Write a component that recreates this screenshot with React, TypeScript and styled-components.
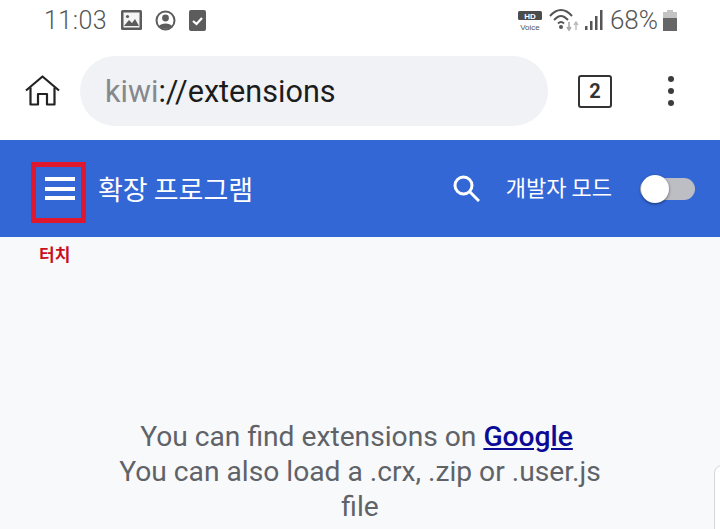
import { createGlobalStyle } from 'styled-components';
import styled from 'styled-components';

const GlobalStyle = createGlobalStyle`
  html, body {
    margin: 0;
    padding: 0;
    background: #f8f9fb;
  }
  body {
    font-family: Roboto, "Noto Sans CJK KR", sans-serif;
  }
`;

const Page = styled.div`
  position: relative;
  width: 720px;
  height: 529px;
  overflow: hidden;
  display: flex;
  flex-direction: column;
`;

const StatusBar = styled.div`
  height: 40px;
  background: #fff;
  display: flex;
  align-items: center;
  padding: 0 43px 0 44px;
  box-sizing: border-box;
  color: #555;
`;

const Clock = styled.span`
  font-size: 25px;
  font-weight: 300;
  margin-right: 14px;
  letter-spacing: 0.5px;
`;

const StatusIcons = styled.div`
  display: flex;
  align-items: center;
  gap: 13px;
`;

const Spacer = styled.div`
  flex: 1;
`;

const Battery = styled.span`
  font-size: 26px;
  font-weight: 300;
  margin: 0 5px 0 6px;
`;

const Toolbar = styled.div`
  height: 100px;
  background: #fff;
  display: flex;
  align-items: center;
  padding: 2px 0 0 25px;
  box-sizing: border-box;
`;

const UrlPill = styled.div`
  width: 468px;
  height: 70px;
  margin: 0 30px 0 20px;
  border-radius: 35px;
  background: #f0f2f5;
  display: flex;
  align-items: center;
  padding-left: 25px;
  box-sizing: border-box;
  font-size: 30.6px;
  color: #1c1c1c;
`;

const Scheme = styled.span`
  color: #85888c;
`;

const TabCount = styled.div`
  width: 34px;
  height: 33px;
  box-sizing: border-box;
  border: 2.5px solid #333;
  border-radius: 3px;
  display: flex;
  align-items: center;
  justify-content: center;
  font-size: 20px;
  font-weight: 700;
  color: #333;
`;

const MenuDots = styled.div`
  margin-left: 56px;
  display: flex;
  flex-direction: column;
  gap: 6px;
`;

const Dot = styled.span`
  width: 6px;
  height: 6px;
  border-radius: 50%;
  background: #3c3c3c;
`;

const Header = styled.header`
  height: 97px;
  background: #3367d6;
  display: flex;
  align-items: center;
  padding: 0 25px 0 45px;
  color: #fff;
`;

const MenuIcon = styled.div`
  width: 30px;
  display: flex;
  flex-direction: column;
  gap: 5.5px;
  margin-right: 23px;
`;

const MenuBar = styled.span`
  height: 4px;
  background: #fff;
`;

const Title = styled.h1`
  margin: 0;
  font-size: 27px;
  font-weight: 400;
  font-family: "Noto Sans CJK KR", sans-serif;
  white-space: nowrap;
`;

const DevLabel = styled.span`
  font-size: 22px;
  font-family: "Noto Sans CJK KR", sans-serif;
  margin: 0 28px 0 26px;
  position: relative;
  top: -3px;
  white-space: nowrap;
`;

const Toggle = styled.div`
  position: relative;
  width: 55px;
  height: 22px;
  border-radius: 11px;
  background: #bdbdc4;
`;

const Knob = styled.span`
  position: absolute;
  left: 1px;
  top: -3px;
  width: 28px;
  height: 28px;
  border-radius: 50%;
  background: #fff;
  box-shadow: 0 1px 3px rgba(0, 0, 0, 0.5);
`;

const Highlight = styled.div`
  position: absolute;
  left: 31px;
  top: 162px;
  width: 55px;
  height: 61px;
  box-sizing: border-box;
  border: 5px solid #e0182d;
`;

const TouchLabel = styled.div`
  position: absolute;
  left: 39px;
  top: 244px;
  font-size: 17px;
  line-height: 20px;
  font-weight: 700;
  color: #c8101c;
  font-family: "Noto Sans CJK KR", sans-serif;
`;

const Content = styled.main`
  flex: 1;
  background: #f8f9fb;
  padding-top: 182px;
  display: flex;
  justify-content: center;
`;

const Message = styled.div`
  width: 520px;
  text-align: center;
  font-size: 28.2px;
  line-height: 35px;
  color: #5f6368;

  a {
    color: #0b0b96;
    font-weight: 500;
  }
`;

const CornerCard = styled.div`
  position: absolute;
  left: 714px;
  top: 465px;
  width: 30px;
  height: 90px;
  background: #fff;
  border: 1px solid #d4d6da;
  border-radius: 8px;
`;

function App() {
  return (
    <Page>
      <GlobalStyle />
      <StatusBar>
        <Clock>11:03</Clock>
        <StatusIcons>
          <svg width="21" height="20" viewBox="0 0 21 20">
            <rect width="21" height="20" rx="1.5" fill="#5c5c5c" />
            <rect x="2.5" y="2.5" width="16" height="15" fill="#f4f4f4" />
            <circle cx="6.5" cy="6.5" r="1.6" fill="#5c5c5c" />
            <path d="M3 16 L8 10 L11 13 L14 9 L18 16 Z" fill="#5c5c5c" />
          </svg>
          <svg width="21" height="21" viewBox="0 0 21 21" fill="none">
            <circle cx="10.5" cy="10.5" r="9" stroke="#5c5c5c" strokeWidth="2" />
            <circle cx="10.5" cy="8" r="3.4" fill="#5c5c5c" />
            <path d="M4 16 C6 12.5 15 12.5 17 16 C14 19.5 7 19.5 4 16 Z" fill="#5c5c5c" />
          </svg>
          <svg width="17" height="21" viewBox="0 0 17 21" fill="none">
            <rect width="17" height="21" rx="2" fill="#5c5c5c" />
            <path d="M4 11 L7.5 14 L13 8" stroke="#fff" strokeWidth="2.2" />
          </svg>
        </StatusIcons>
        <Spacer />
        <svg width="24" height="21" viewBox="0 0 24 21">
          <rect y="1" width="24" height="9" rx="1.5" fill="#4c4c4c" />
          <text x="12" y="8.5" fontSize="8" fontWeight="700" textAnchor="middle" fill="#fff" fontFamily="Liberation Sans">HD</text>
          <text x="12" y="20" fontSize="8" textAnchor="middle" fill="#555" fontFamily="Liberation Sans">Voice</text>
        </svg>
        <svg width="34" height="24" viewBox="0 0 34 24" fill="none" style={{ marginLeft: 7 }}>
          <path d="M1 8 C8 0 16 0 23 8" stroke="#555" strokeWidth="2" />
          <path d="M5 12 C10 6.5 14 6.5 19 12" stroke="#555" strokeWidth="2" />
          <path d="M9 15.5 C11 13.5 13 13.5 15 15.5" stroke="#555" strokeWidth="2" />
          <circle cx="12" cy="19" r="2" fill="#555" />
          <path d="M20 14 V22 M18 19 L20 22 L22 19" stroke="#aaa" strokeWidth="1.6" />
          <path d="M27 22 V14 M25 17 L27 14 L29 17" stroke="#bbb" strokeWidth="1.4" />
        </svg>
        <svg width="20" height="22" viewBox="0 0 20 22" style={{ marginLeft: 1 }}>
          <rect x="1" y="17" width="2.5" height="4" fill="#555" />
          <rect x="6" y="12" width="2.5" height="9" fill="#555" />
          <rect x="11" y="7" width="2.5" height="14" fill="#555" />
          <rect x="16" y="1" width="2.5" height="20" fill="#555" />
        </svg>
        <Battery>68%</Battery>
        <svg width="14" height="21" viewBox="0 0 14 21">
          <rect x="4" y="0" width="6" height="3" fill="#c4c4c4" />
          <rect x="0" y="2" width="14" height="6" fill="#c4c4c4" />
          <rect x="0" y="8" width="14" height="13" fill="#666" />
        </svg>
      </StatusBar>
      <Toolbar>
        <svg width="35" height="32" viewBox="0 0 35 32" fill="none" stroke="#222" strokeWidth="2.2" strokeLinejoin="round">
          <path d="M1 15.5 L17.5 1.5 L34 15.5" />
          <path d="M5.5 12.5 V29.5 H13 V19 H22 V29.5 H29.5 V12.5" />
        </svg>
        <UrlPill>
          <Scheme>kiwi</Scheme>://extensions
        </UrlPill>
        <TabCount>2</TabCount>
        <MenuDots>
          <Dot />
          <Dot />
          <Dot />
        </MenuDots>
      </Toolbar>
      <Header>
        <MenuIcon>
          <MenuBar />
          <MenuBar />
          <MenuBar />
        </MenuIcon>
        <Title>확장 프로그램</Title>
        <Spacer />
        <svg width="27" height="27" viewBox="0 0 27 27" fill="none" stroke="#fff" strokeWidth="3">
          <circle cx="10.5" cy="10.5" r="8.5" />
          <path d="M16.5 16.5 L26 26" />
        </svg>
        <DevLabel>개발자 모드</DevLabel>
        <Toggle>
          <Knob />
        </Toggle>
      </Header>
      <Content>
        <Message>
          You can find extensions on <a href="#google">Google</a>&nbsp;
          <br />
          You can also load a .crx, .zip or .user.js
          <br />
          file
        </Message>
      </Content>
      <Highlight />
      <TouchLabel>터치</TouchLabel>
      <CornerCard />
    </Page>
  );
}

export default App;
